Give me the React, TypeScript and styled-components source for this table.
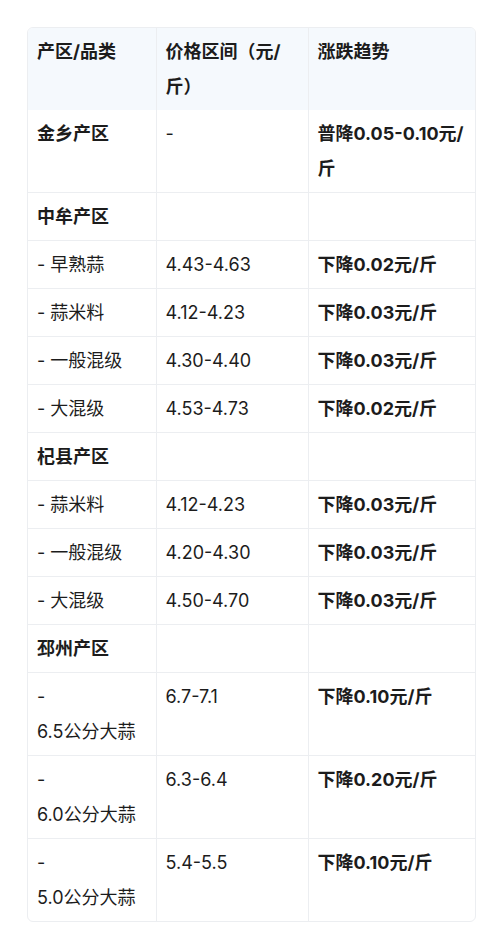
import React from "react";
import styled, { createGlobalStyle } from "styled-components";

const Global = createGlobalStyle`
  html, body { margin: 0; padding: 0; background: #ffffff; }
  body { font-family: Inter, "Noto Sans CJK SC", "Noto Sans", sans-serif; color: #1c1c1c; }
`;

const Page = styled.div`
  padding: 27px 24px 10px 27px;
`;

const Frame = styled.div`
  width: 449px;
  border: 1px solid #eceef1;
  border-radius: 6px;
  overflow: hidden;
  box-sizing: border-box;
`;

const Table = styled.table`
  width: 100%;
  border-collapse: collapse;
  table-layout: fixed;
  font-size: 18px;
  line-height: 35px;
`;

const HeadRow = styled.tr`
  background: #f5f9fd;
`;

const Cell = styled.td<{ $bold?: boolean; $keep?: boolean }>`
  padding: 6px 10px 6px 9px;
  vertical-align: top;
  border-right: 1px solid #eceef1;
  border-bottom: 1px solid #eceef1;
  font-weight: ${(p) => (p.$bold ? 700 : 400)};
  word-break: ${(p) => (p.$keep ? "keep-all" : "normal")};
  overflow-wrap: break-word;
  &:last-child { border-right: none; }
  tr:last-child > & { border-bottom: none; }
`;

const HeadCell = styled(Cell).attrs({ as: "th" })`
  text-align: left;
  font-weight: 700;
`;

type Row = { name: string; price: string; trend: string; region?: boolean };

const rows: Row[] = [
  { name: "金乡产区", price: "-", trend: "普降0.05-0.10元/斤", region: true },
  { name: "中牟产区", price: "", trend: "", region: true },
  { name: "- 早熟蒜", price: "4.43-4.63", trend: "下降0.02元/斤" },
  { name: "- 蒜米料", price: "4.12-4.23", trend: "下降0.03元/斤" },
  { name: "- 一般混级", price: "4.30-4.40", trend: "下降0.03元/斤" },
  { name: "- 大混级", price: "4.53-4.73", trend: "下降0.02元/斤" },
  { name: "杞县产区", price: "", trend: "", region: true },
  { name: "- 蒜米料", price: "4.12-4.23", trend: "下降0.03元/斤" },
  { name: "- 一般混级", price: "4.20-4.30", trend: "下降0.03元/斤" },
  { name: "- 大混级", price: "4.50-4.70", trend: "下降0.03元/斤" },
  { name: "邳州产区", price: "", trend: "", region: true },
  { name: "- 6.5公分大蒜", price: "6.7-7.1", trend: "下降0.10元/斤" },
  { name: "- 6.0公分大蒜", price: "6.3-6.4", trend: "下降0.20元/斤" },
  { name: "- 5.0公分大蒜", price: "5.4-5.5", trend: "下降0.10元/斤" },
];

export default function App() {
  return (
    <>
      <Global />
      <Page>
        <Frame>
          <Table>
            <colgroup>
              <col style={{ width: 128 }} />
              <col style={{ width: 152 }} />
              <col />
            </colgroup>
            <thead>
              <HeadRow>
                <HeadCell>产区/品类</HeadCell>
                <HeadCell>价格区间（元/斤）</HeadCell>
                <HeadCell>涨跌趋势</HeadCell>
              </HeadRow>
            </thead>
            <tbody>
              {rows.map((r, i) => (
                <tr key={i}>
                  <Cell $bold={r.region} $keep>{r.name}</Cell>
                  <Cell>{r.price}</Cell>
                  <Cell $bold>{r.trend}</Cell>
                </tr>
              ))}
            </tbody>
          </Table>
        </Frame>
      </Page>
    </>
  );
}
